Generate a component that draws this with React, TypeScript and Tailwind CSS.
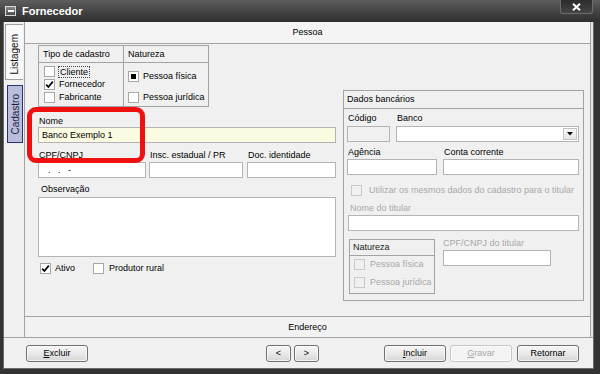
import React from "react";

const Tick = () => (
  <svg width="9" height="9" viewBox="0 0 9 9">
    <path d="M1.2 4.6 L3.4 7 L7.8 1.6" stroke="#000" strokeWidth="1.7" fill="none" />
  </svg>
);

function CheckBox({ checked = false, disabled = false }: { checked?: boolean; disabled?: boolean }) {
  return (
    <div
      className={
        disabled
          ? "w-[11px] h-[11px] shrink-0 border border-[#c9c9c9] bg-[#f0f0f0] flex items-center justify-center"
          : "w-[11px] h-[11px] shrink-0 border border-[#a7a7a7] bg-white flex items-center justify-center"
      }
    >
      {checked && <Tick />}
    </div>
  );
}

function Radio({ checked = false }: { checked?: boolean }) {
  return (
    <div className="w-[11px] h-[11px] shrink-0 border border-[#a7a7a7] bg-white flex items-center justify-center">
      {checked && <div className="w-[5px] h-[5px] bg-black" />}
    </div>
  );
}

function Btn({
  children,
  className,
  disabled = false,
}: {
  children: React.ReactNode;
  className: string;
  disabled?: boolean;
}) {
  return (
    <div
      className={
        (disabled
          ? "border-[#c6c6c6] text-[#a6a6a6] bg-[#f4f4f4] "
          : "border-[#707070] text-black bg-linear-to-b from-[#f6f6f6] via-[#e9e9e9] to-[#d6d6d6] ") +
        "h-[17px] border rounded-[3px] flex items-center justify-center shadow-[inset_0_0_0_1px_rgba(255,255,255,0.7)] " +
        className
      }
    >
      {children}
    </div>
  );
}

export default function App() {
  return (
    <div className="w-[600px] h-[374px] bg-[#333333] flex flex-col font-['Liberation_Sans',Arial,sans-serif] text-[9px] leading-[11px] text-black relative overflow-hidden">
      {/* Title bar */}
      <div className="h-[22px] shrink-0 bg-linear-to-b from-[#5e5e5e] via-[#454545] to-[#2e2e2e] flex items-center relative">
        <div className="ml-[5px] w-[11px] h-[10px] border border-[#d8d8d8] bg-linear-to-b from-[#8a8a8a] to-[#4a4a4a] flex items-center justify-center">
          <div className="w-[6px] h-[2px] bg-white" />
        </div>
        <div className="ml-[6px] text-white font-bold text-[11px] leading-[13px]">Fornecedor</div>
        <div className="absolute right-[7px] top-0 w-[33px] h-[14px] rounded-b-[3px] border border-t-0 border-[#6c6c6c] bg-linear-to-b from-[#2c2c2c] to-[#454545] flex items-center justify-center">
          <svg width="9" height="8" viewBox="0 0 9 8">
            <path d="M1 0.8 L8 7.2 M8 0.8 L1 7.2" stroke="#fff" strokeWidth="2" />
          </svg>
        </div>
      </div>

      {/* Window body */}
      <div className="flex-1 ml-[4px] mr-[7px] mb-[6px] bg-[#f0f0f0] flex flex-col shadow-[0_0_0_1px_#6a6a6a]">
        <div className="h-[316px] flex border-b border-[#a3a3a3]">
          {/* Side tabs */}
          <div className="w-[20px] shrink-0 flex flex-col">
            <div className="mt-[2px] ml-[1px] w-[18px] h-[56px] bg-[#f9f9f9] border border-r-0 border-[#a0a0a0] flex items-end justify-center pb-[4px]">
              <span className="[writing-mode:vertical-rl] rotate-180 text-[#111] text-[10px]">Listagem</span>
            </div>
            <div className="mt-[5px] ml-[3px] w-[16px] h-[58px] bg-[#b9bedc] border border-[#2d3170] flex items-center justify-center">
              <span className="[writing-mode:vertical-rl] rotate-180 text-[#1c1c3a] text-[10px]">Cadastro</span>
            </div>
          </div>

          {/* Main panel */}
          <div className="w-[567px] shrink-0 flex flex-col border-l border-r border-[#a3a3a3]">
            <div className="h-[22px] shrink-0 border-b border-[#a3a3a3] bg-[#f4f4f4] flex items-center justify-center">
              Pessoa
            </div>

            <div className="h-[272px] shrink-0 flex pl-[13px]">
              {/* Left column */}
              <div className="w-[298px] shrink-0 flex flex-col">
                <div className="mt-[1px] w-[171px] h-[62px] border border-[#a3a3a3] flex flex-col">
                  <div className="h-[17px] shrink-0 flex border-b border-[#a3a3a3]">
                    <div className="w-[85px] border-r border-[#a3a3a3] pl-[4px] flex items-center">Tipo de cadastro</div>
                    <div className="flex-1 pl-[4px] flex items-center">Natureza</div>
                  </div>
                  <div className="flex flex-1">
                    <div className="w-[85px] border-r border-[#a3a3a3] pl-[5px] pt-[3px] flex flex-col gap-[2px]">
                      <div className="flex items-center h-[11px]">
                        <CheckBox />
                        <span className="ml-[3px] border border-dotted border-[#444] px-[1px] leading-[10px]">Cliente</span>
                      </div>
                      <div className="flex items-center h-[11px]">
                        <CheckBox checked />
                        <span className="ml-[4px]">Fornecedor</span>
                      </div>
                      <div className="flex items-center h-[11px]">
                        <CheckBox />
                        <span className="ml-[4px]">Fabricante</span>
                      </div>
                    </div>
                    <div className="flex-1 pl-[4px] pt-[8px] flex flex-col gap-[10px]">
                      <div className="flex items-center h-[11px]">
                        <Radio checked />
                        <span className="ml-[4px]">Pessoa física</span>
                      </div>
                      <div className="flex items-center h-[11px]">
                        <Radio />
                        <span className="ml-[4px]">Pessoa jurídica</span>
                      </div>
                    </div>
                  </div>
                </div>

                <div className="mt-[9px] h-[11px] pl-[1px]">Nome</div>
                <div className="h-[16px] border border-[#b4b4b4] bg-[#fbfbe2] pl-[3px] flex items-center">Banco Exemplo 1</div>

                <div className="mt-[7px] flex">
                  <div className="w-[108px] flex flex-col">
                    <div className="h-[11px] pl-[1px]">CPF/CNPJ</div>
                    <div className="mt-[1px] h-[16px] border border-[#b4b4b4] bg-white pl-[4px] flex items-center whitespace-pre">{"  .   .   -"}</div>
                  </div>
                  <div className="ml-[3px] w-[94px] flex flex-col">
                    <div className="h-[11px] pl-[1px]">Insc. estadual / PR</div>
                    <div className="mt-[1px] h-[16px] border border-[#b4b4b4] bg-white" />
                  </div>
                  <div className="ml-[4px] flex-1 flex flex-col">
                    <div className="h-[11px] pl-[1px]">Doc. identidade</div>
                    <div className="mt-[1px] h-[16px] border border-[#b4b4b4] bg-white" />
                  </div>
                </div>

                <div className="mt-[6px] h-[11px] pl-[3px]">Observação</div>
                <div className="mt-[2px] h-[60px] border border-[#b4b4b4] bg-white" />

                <div className="mt-[6px] flex items-center h-[11px]">
                  <div className="ml-[2px]">
                    <CheckBox checked />
                  </div>
                  <span className="ml-[4px]">Ativo</span>
                  <div className="ml-[18px]">
                    <CheckBox />
                  </div>
                  <span className="ml-[5px]">Produtor rural</span>
                </div>
              </div>

              {/* Right column */}
              <div className="ml-[7px] w-[241px] shrink-0">
                <div className="mt-[46px] h-[211px] border border-[#a3a3a3] flex flex-col">
                  <div className="h-[18px] shrink-0 border-b border-[#a3a3a3] pl-[3px] flex items-center">Dados bancários</div>
                  <div className="pl-[3px] pr-[4px] flex flex-col">
                    <div className="mt-[4px] flex">
                      <div className="w-[43px] flex flex-col">
                        <div className="h-[11px] pl-[1px]">Código</div>
                        <div className="mt-[2px] h-[16px] border border-[#b4b4b4] bg-[#f0f0f0]" />
                      </div>
                      <div className="ml-[6px] flex-1 flex flex-col">
                        <div className="h-[11px] pl-[1px]">Banco</div>
                        <div className="mt-[2px] h-[16px] border border-[#b4b4b4] bg-white flex items-center justify-end pr-[1px]">
                          <div className="w-[14px] h-[12px] border border-[#c4c4c4] bg-linear-to-b from-[#fafafa] to-[#e4e4e4] flex items-center justify-center">
                            <svg width="6" height="4" viewBox="0 0 6 4">
                              <path d="M0 0 H6 L3 3.5 Z" fill="#000" />
                            </svg>
                          </div>
                        </div>
                      </div>
                    </div>

                    <div className="mt-[5px] flex">
                      <div className="w-[90px] flex flex-col">
                        <div className="h-[11px] pl-[1px]">Agência</div>
                        <div className="mt-[1px] h-[16px] border border-[#b4b4b4] bg-white" />
                      </div>
                      <div className="ml-[6px] flex-1 flex flex-col">
                        <div className="h-[11px] pl-[1px]">Conta corrente</div>
                        <div className="mt-[1px] h-[16px] border border-[#b4b4b4] bg-white" />
                      </div>
                    </div>

                    <div className="mt-[10px] flex items-center h-[11px]">
                      <div className="ml-[4px]">
                        <CheckBox disabled />
                      </div>
                      <span className="ml-[7px] text-[#a8a8a8]">Utilizar os mesmos dados do cadastro para o titular</span>
                    </div>

                    <div className="mt-[7px] h-[11px] pl-[3px] text-[#a8a8a8]">Nome do titular</div>
                    <div className="mt-[1px] ml-[1px] h-[16px] border border-[#b4b4b4] bg-white" />

                    <div className="mt-[7px] flex items-start">
                      <div className="mt-[1px] ml-[2px] w-[86px] h-[55px] border border-[#a3a3a3] flex flex-col">
                        <div className="h-[16px] shrink-0 border-b border-[#a3a3a3] pl-[3px] flex items-center text-[#222]">Natureza</div>
                        <div className="pl-[4px] pt-[3px] flex flex-col gap-[7px]">
                          <div className="flex items-center h-[11px]">
                            <CheckBox disabled />
                            <span className="ml-[5px] text-[#a8a8a8]">Pessoa física</span>
                          </div>
                          <div className="flex items-center h-[11px]">
                            <CheckBox disabled />
                            <span className="ml-[5px] text-[#a8a8a8]">Pessoa jurídica</span>
                          </div>
                        </div>
                      </div>
                      <div className="ml-[8px] w-[108px] flex flex-col">
                        <div className="h-[11px] text-[#a8a8a8]">CPF/CNPJ do titular</div>
                        <div className="mt-[1px] h-[16px] border border-[#b4b4b4] bg-white" />
                      </div>
                    </div>
                  </div>
                </div>
              </div>
            </div>

            <div className="h-[21px] shrink-0 border-t border-[#a3a3a3] bg-[#f2f2f2] flex items-center justify-center">
              Endereço
            </div>
          </div>
          <div className="flex-1 bg-[#e6e6e6]" />
        </div>

        {/* Footer */}
        <div className="flex-1 flex items-start pt-[7px]">
          <Btn className="ml-[22px] w-[62px]">
            <span>
              <span className="underline">E</span>xcluir
            </span>
          </Btn>
          <Btn className="ml-[178px] w-[25px]">&lt;</Btn>
          <Btn className="ml-[3px] w-[25px]">&gt;</Btn>
          <Btn className="ml-[65px] w-[62px]">
            <span>
              <span className="underline">I</span>ncluir
            </span>
          </Btn>
          <Btn className="ml-[4px] w-[62px]" disabled>
            <span>
              <span className="underline">G</span>ravar
            </span>
          </Btn>
          <Btn className="ml-[5px] w-[62px]">Retornar</Btn>
        </div>
      </div>

      {/* Red annotation */}
      <div className="absolute left-[27px] top-[107px] w-[118px] h-[56px] border-[5px] border-[#f01010] rounded-[9px]" />
    </div>
  );
}
